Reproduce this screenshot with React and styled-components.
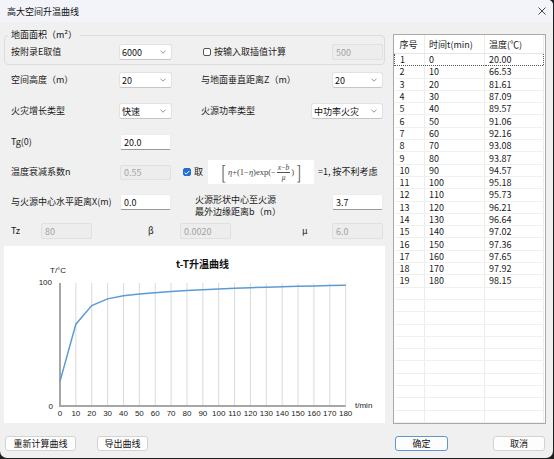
import React from "react";
import styled, { createGlobalStyle } from "styled-components";

const temps = [
  20.0, 66.53, 81.61, 87.09, 89.57, 91.06, 92.16, 93.08, 93.87, 94.57,
  95.18, 95.73, 96.21, 96.64, 97.02, 97.36, 97.65, 97.92, 98.15,
];

const GlobalStyle = createGlobalStyle`
  html, body {
    margin: 0;
    padding: 0;
    background: #1f1f1f;
  }
  body {
    font-family: "Noto Sans CJK SC", "Noto Sans", sans-serif;
    font-size: 9px;
    color: #1a1a1a;
  }
`;

const Window = styled.div`
  width: 553px;
  height: 458px;
  background: #f0f0f0;
  border-radius: 0 5px 7px 7px;
  display: flex;
  flex-direction: column;
  overflow: hidden;
`;

const TitleBar = styled.div`
  height: 22px;
  flex-shrink: 0;
  background: #f3f4f9;
  display: flex;
  align-items: center;
  justify-content: space-between;
  padding: 0 7px 0 7px;
  font-size: 9px;
  color: #111;
`;

const Body = styled.div`
  display: grid;
  grid-template-columns: 381px 153px;
  grid-template-rows: auto 15px;
  column-gap: 8px;
  row-gap: 12px;
  padding: 0 0 0 4px;
`;

const LeftCol = styled.div`
  display: flex;
  flex-direction: column;
`;

const Group = styled.fieldset`
  margin: 7px 0 0 0;
  padding: 0 1px 4px 6px;
  border: 1px solid #dcdcdc;
  border-radius: 4px;
  min-inline-size: 0;
`;

const Legend = styled.legend`
  padding: 0 3px;
  margin-left: -3px;
  font-size: 9px;
  line-height: 12px;
  color: #111;
`;

const Fields = styled.div`
  display: flex;
  flex-direction: column;
  padding: 0 2px 0 7px;
`;

const Row = styled.div`
  display: flex;
  align-items: center;
  height: ${(p) => p.$h || 16}px;
  margin-top: ${(p) => p.$mt || 0}px;
`;

const Label = styled.span`
  flex-shrink: 0;
  width: ${(p) => (p.$w ? `${p.$w}px` : "auto")};
  margin-left: ${(p) => (p.$ml === "auto" ? "auto" : `${p.$ml || 0}px`)};
  white-space: nowrap;
  line-height: 12px;
`;

const TwoLine = styled.span`
  margin-left: ${(p) => p.$ml}px;
  margin-top: 8px;
  line-height: 12px;
  white-space: nowrap;
`;

const SelectBox = styled.div`
  flex-shrink: 0;
  box-sizing: border-box;
  width: ${(p) => p.$w}px;
  height: 16px;
  margin-left: ${(p) => (p.$ml === "auto" ? "auto" : `${p.$ml || 0}px`)};
  background: #fff;
  border: 1px solid #e2e2e2;
  border-bottom-color: #c6c6c6;
  border-radius: 3px;
  display: flex;
  align-items: center;
  justify-content: space-between;
  padding: 0 5px 0 2px;
  color: #111;
`;

const Field = styled.input`
  flex-shrink: 0;
  box-sizing: border-box;
  width: ${(p) => p.$w}px;
  height: ${(p) => p.$h || 16}px;
  margin: 0 0 0 ${(p) => (p.$ml === "auto" ? "auto" : `${p.$ml || 0}px`)};
  padding: 0 3px;
  font: inherit;
  font-size: 9px;
  color: ${(p) => (p.disabled ? "#a3a3a3" : "#111")};
  background: ${(p) => (p.disabled ? "#ededed" : "#fff")};
  border: 1px solid ${(p) => (p.disabled ? "#e0e0e0" : "#ececec")};
  border-bottom-color: ${(p) => (p.disabled ? "#e0e0e0" : "#9a9a9a")};
  border-radius: 2px;
  outline: none;
`;

const Check = styled.span`
  flex-shrink: 0;
  box-sizing: border-box;
  width: 8px;
  height: 8px;
  margin-left: ${(p) => p.$ml || 0}px;
  margin-right: 3px;
  border-radius: 2px;
  border: 1px solid ${(p) => (p.$checked ? "#1f6fd1" : "#555")};
  background: ${(p) => (p.$checked ? "#1f6fd1" : "#fff")};
  display: flex;
  align-items: center;
  justify-content: center;
`;

const Formula = styled.div`
  flex-shrink: 0;
  width: 106px;
  height: 24px;
  margin-left: 5px;
  background: #fff;
  display: flex;
  align-items: center;
  justify-content: center;
  font-family: "Liberation Serif", "DejaVu Serif", serif;
  font-size: 8.5px;
  color: #444;
  i {
    font-style: italic;
  }
`;

const Bracket = styled.span`
  font-size: 22px;
  font-weight: 200;
  line-height: 22px;
  color: #666;
  margin: 0 1px;
  transform: scaleX(0.6);
`;

const Frac = styled.span`
  display: inline-flex;
  flex-direction: column;
  align-items: center;
  margin: 0 1px;
  line-height: 9px;
  font-size: 7.5px;
`;

const Num = styled.span`
  border-bottom: 0.6px solid #555;
  padding: 0 1px;
`;

const ChartPanel = styled.div`
  margin-top: 7px;
  height: 177px;
  background: #fff;
`;

const RightCol = styled.div`
  margin-top: 12px;
  height: 390px;
  box-sizing: border-box;
  border: 1px solid #a9a9a9;
  background: #fff;
  overflow: hidden;
`;

const Table = styled.table`
  border-collapse: collapse;
  table-layout: fixed;
  width: 149px;
  font-size: 9px;
  color: #1a1a1a;
`;

const Th = styled.th`
  height: 18px;
  padding: 0 0 0 ${(p) => p.$pl}px;
  text-align: left;
  font-weight: normal;
  border-right: 1px solid #ececec;
  border-bottom: 1px solid #e6e6e6;
  white-space: nowrap;
`;

const Td = styled.td`
  height: 11.3px;
  padding: 0 0 0 ${(p) => p.$pl}px;
  line-height: 11px;
  border-right: 1px solid #ececec;
  border-bottom: 1px solid #f0f0f0;
  white-space: nowrap;
  ${(p) =>
    p.$focus &&
    `
    border-top: 1px dotted #555;
    border-bottom: 1px dotted #555;
  `}
  ${(p) => p.$focusL && "border-left: 1px dotted #555;"}
  ${(p) => p.$focusR && "border-right: 1px dotted #555;"}
`;

const ButtonRow = styled.div`
  display: flex;
  align-items: center;
  gap: ${(p) => p.$gap}px;
  justify-content: ${(p) => p.$justify || "flex-start"};
  padding: 0 ${(p) => p.$pr || 0}px 0 ${(p) => p.$pl || 0}px;
`;

const Button = styled.button`
  box-sizing: border-box;
  width: ${(p) => p.$w}px;
  height: 15px;
  padding: 0;
  font: inherit;
  font-size: 9px;
  color: #111;
  background: #fdfdfd;
  border: 1px solid ${(p) => (p.$primary ? "#5b97d2" : "#d3d3d3")};
  border-radius: 3px;
`;

function Chevron() {
  return (
    <svg width="6" height="4" viewBox="0 0 6 4">
      <polyline points="0.5,0.8 3,3.2 5.5,0.8" fill="none" stroke="#777" strokeWidth="0.8" />
    </svg>
  );
}

function Select({ value, w, ml }) {
  return (
    <SelectBox $w={w} $ml={ml}>
      <span>{value}</span>
      <Chevron />
    </SelectBox>
  );
}

function Chart() {
  const x0 = 56;
  const step = 15.87;
  const yb = 160;
  const yt = 37;
  const sy = (yb - yt) / 100;
  const pts = temps.map((t, i) => `${x0 + i * step},${yb - t * sy}`).join(" ");
  const ticks = Array.from({ length: 19 }, (_, i) => i * 10);
  return (
    <svg width="379" height="177" viewBox="0 0 379 177">
      <text x="198.5" y="22" textAnchor="middle" fontSize="10" fontWeight="bold"
        fontFamily='"Noto Sans CJK SC", sans-serif' fill="#111">
        t-T升温曲线
      </text>
      {ticks.slice(1).map((t, i) => (
        <line key={t} x1={x0 + (i + 1) * step} x2={x0 + (i + 1) * step} y1={yt} y2={yb}
          stroke="#dadada" strokeWidth="1" />
      ))}
      <line x1={x0} x2={x0} y1={yt} y2={yb + 1} stroke="#a6a6a6" strokeWidth="2" />
      <line x1={x0} x2={x0 + 18 * step} y1={yb} y2={yb} stroke="#a6a6a6" strokeWidth="2" />
      <polyline points={pts} fill="none" stroke="#5b9bd5" strokeWidth="1.5" />
      <g fontFamily='"Liberation Sans", Arial, sans-serif' fontSize="8" fill="#222">
        {ticks.map((t, i) => (
          <text key={t} x={x0 + i * step} y="170" textAnchor="middle">{t}</text>
        ))}
        <text x="48" y="39" textAnchor="end">100</text>
        <text x="49" y="163" textAnchor="end">0</text>
        <text x="46" y="27">T/°C</text>
        <text x="351" y="162">t/min</text>
      </g>
    </svg>
  );
}

export default function App() {
  const rows = [];
  for (let i = 0; i < 30; i++) {
    rows.push(
      i < temps.length
        ? [String(i + 1), String(i * 10), temps[i].toFixed(2)]
        : ["", "", ""]
    );
  }

  return (
    <>
      <GlobalStyle />
      <Window>
        <TitleBar>
          <span>高大空间升温曲线</span>
          <svg width="8" height="8" viewBox="0 0 8 8">
            <path d="M0.5 0.5 L7.5 7.5 M7.5 0.5 L0.5 7.5" stroke="#333" strokeWidth="0.9" />
          </svg>
        </TitleBar>
        <Body>
          <LeftCol>
            <Group>
              <Legend>地面面积（m²）</Legend>
              <Row $mt={3}>
                <Label $w={108}>按附录E取值</Label>
                <Select value="6000" w={53} />
                <Check $ml={31} />
                <Label>按输入取插值计算</Label>
                <Field $w={51} $ml="auto" disabled defaultValue="500" />
              </Row>
            </Group>
            <Fields>
              <Row $mt={7}>
                <Label $w={108}>空间高度（m）</Label>
                <Select value="20" w={53} />
                <Label $ml={29}>与地面垂直距离Z（m）</Label>
                <Select value="20" w={51} ml="auto" />
              </Row>
              <Row $mt={15}>
                <Label $w={108}>火灾增长类型</Label>
                <Select value="快速" w={53} />
                <Label $ml={29}>火源功率类型</Label>
                <Select value="中功率火灾" w={72} ml="auto" />
              </Row>
              <Row $mt={15}>
                <Label $w={109}>Tg(0)</Label>
                <Field $w={51} defaultValue="20.0" />
              </Row>
              <Row $mt={10} $h={24}>
                <Label $w={109}>温度衰减系数n</Label>
                <Field $w={51} disabled defaultValue="0.55" $h={15} />
                <Check $ml={12} $checked>
                  <svg width="6" height="5" viewBox="0 0 6 5">
                    <polyline points="0.6,2.6 2.3,4.1 5.4,0.8" fill="none" stroke="#fff" strokeWidth="1" />
                  </svg>
                </Check>
                <Label>取</Label>
                <Formula>
                  <Bracket>[</Bracket>
                  <span>
                    <i>η</i>+(1−<i>η</i>)exp(−
                  </span>
                  <Frac>
                    <Num>
                      <i>x</i>−<i>b</i>
                    </Num>
                    <span>
                      <i>μ</i>
                    </span>
                  </Frac>
                  <span>)</span>
                  <Bracket>]</Bracket>
                </Formula>
                <Label $ml={4}>=1, 按不利考虑</Label>
              </Row>
              <Row $mt={10}>
                <Label $w={109}>与火源中心水平距离X(m)</Label>
                <Field $w={51} defaultValue="0.0" />
                <TwoLine $ml={24}>
                  火源形状中心至火源
                  <br />
                  最外边缘距离b（m）
                </TwoLine>
                <Field $w={51} $ml="auto" defaultValue="3.7" />
              </Row>
              <Row $mt={13}>
                <Label $w={30}>Tz</Label>
                <Field $w={51} disabled defaultValue="80" />
                <Label $w={32} $ml={56}>β</Label>
                <Field $w={51} disabled defaultValue="0.0020" />
                <Label $w={30} $ml={71}>μ</Label>
                <Field $w={51} disabled defaultValue="6.0" />
              </Row>
            </Fields>
            <ChartPanel>
              <Chart />
            </ChartPanel>
          </LeftCol>

          <RightCol>
            <Table>
              <colgroup>
                <col style={{ width: 30 }} />
                <col style={{ width: 60 }} />
                <col style={{ width: 59 }} />
              </colgroup>
              <thead>
                <tr>
                  <Th $pl={5}>序号</Th>
                  <Th $pl={4}>时间t(min)</Th>
                  <Th $pl={4}>温度(℃)</Th>
                </tr>
              </thead>
              <tbody>
                {rows.map((r, i) => (
                  <tr key={i}>
                    <Td $pl={5} $focus={i === 0} $focusL={i === 0}>{r[0]}</Td>
                    <Td $pl={4} $focus={i === 0}>{r[1]}</Td>
                    <Td $pl={4} $focus={i === 0} $focusR={i === 0}>{r[2]}</Td>
                  </tr>
                ))}
              </tbody>
            </Table>
          </RightCol>

          <ButtonRow $gap={21} $pl={1}>
            <Button $w={71}>重新计算曲线</Button>
            <Button $w={51}>导出曲线</Button>
          </ButtonRow>
          <ButtonRow $justify="space-between" $pl={2} $pr={1}>
            <Button $w={53} $primary>确定</Button>
            <Button $w={52}>取消</Button>
          </ButtonRow>
        </Body>
      </Window>
    </>
  );
}
